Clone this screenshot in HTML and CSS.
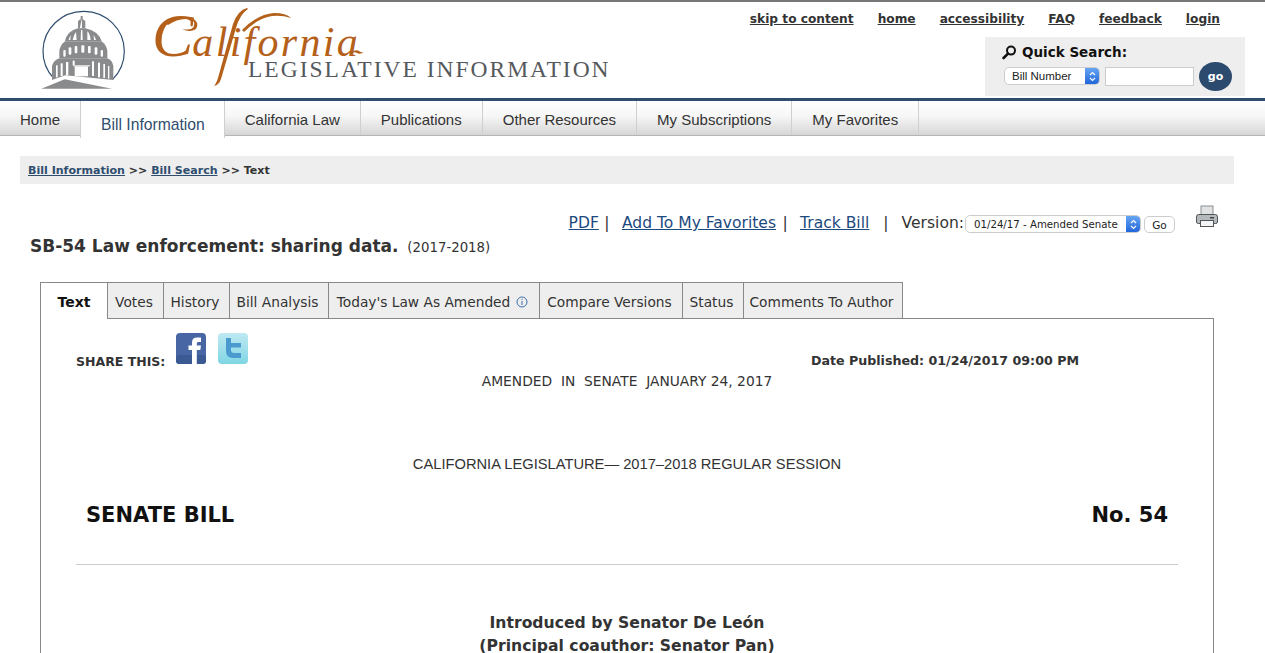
FILE: index.html
```html
<!DOCTYPE html>
<html lang="en">
<head>
<meta charset="utf-8">
<title>SB-54 Law enforcement: sharing data.</title>
<link rel="stylesheet" href="styles.css">
</head>
<body>
<header class="masthead">
  <svg class="seal" width="110" height="96" viewBox="0 6 330 288" aria-label="California State Capitol">
    <path d="M72 236 A122 120 0 1 1 248 238" fill="none" stroke="#2f4d6e" stroke-width="3.5"/>
    <g fill="#8a8b8d">
      <rect x="152" y="48" width="6" height="10"/>
      <path d="M144 85 V64 Q155 50 166 64 V85Z"/>
      <path d="M104 125 Q112 92 144 85 H166 Q204 92 216 125Z"/>
      <path d="M88 175 V152 Q92 132 104 125 H216 Q228 132 232 152 V175Z"/>
      <path d="M66 240 V198 Q70 182 88 175 H232 Q248 182 250 198 V240 L106 226Z"/>
      <path d="M34 266 L104 238 L246 266Z"/>
    </g>
    <g fill="#fff">
      <path d="M150 84 q3-20 6-26 v26z M128 120 q3-16 10-24 l2 24z M152 120 l1-30 h4 l1 30z M172 120 v-26 q8 6 10 26z M116 120 q2-8 6-14 l-1 14z M192 120 l-1-14 q5 6 7 14z"/>
      <rect x="100" y="150" width="7" height="20" rx="3"/><rect x="116" y="142" width="8" height="22" rx="3"/>
      <rect x="134" y="138" width="8" height="22" rx="3"/><rect x="154" y="136" width="9" height="22" rx="3"/>
      <rect x="174" y="138" width="8" height="22" rx="3"/><rect x="194" y="142" width="8" height="22" rx="3"/>
      <rect x="212" y="150" width="7" height="20" rx="3"/>
      <rect x="78" y="196" width="5" height="36"/><rect x="92" y="190" width="6" height="38"/>
      <rect x="108" y="186" width="7" height="40"/><rect x="128" y="182" width="6" height="14"/>
      <rect x="130" y="196" width="50" height="3"/><rect x="134" y="199" width="40" height="30"/>
      <rect x="186" y="184" width="6" height="44"/><rect x="204" y="188" width="6" height="44"/>
      <rect x="220" y="192" width="5" height="42"/><rect x="234" y="198" width="4" height="38"/>
    </g>
  </svg>
  <svg class="wordmark" width="480" height="96" viewBox="0 2 480 96">
    <text class="wordmark-script" x="2" y="56">C<tspan class="wordmark-rest" dx="-1">alifornia</tspan></text>
    <path class="wordmark-swash" d="M97 8 Q88 10 83 24 L68 78 Q66 84 64 86 Q69 85 71 79 L86 28 Q90 14 98 9Z"/>
    <path class="wordmark-swash" d="M92 30 Q108 14 124 13 Q136 13 141 18 Q132 15 122 16 Q108 18 94 32Z"/>
    <path class="wordmark-swash" d="M16 24 Q28 13 42 18 Q50 22 46 29 Q40 33 32 29 Q42 31 44 26 Q46 20 38 19 Q28 18 18 25Z"/>
    <path class="wordmark-swash" d="M200 53 Q205 49 209 51 Q211 53 214 52 Q210 55 207 53 Q204 51 200 54Z"/>
    <text class="wordmark-sub" x="98" y="77">LEGISLATIVE INFORMATION</text>
  </svg>
  <div class="masthead-right">
    <nav class="utility">
      <a href="#">skip to content</a>
      <a href="#">home</a>
      <a href="#">accessibility</a>
      <a href="#">FAQ</a>
      <a href="#">feedback</a>
      <a href="#">login</a>
    </nav>
    <form class="quick">
      <div class="quick-title">
        <svg width="15" height="15" viewBox="0 0 15 15"><circle cx="9" cy="5.6" r="4" fill="none" stroke="#111" stroke-width="2"/><path d="M6 8.6 L1.6 13" stroke="#111" stroke-width="2.6" stroke-linecap="round"/></svg>
        <span>Quick Search:</span>
      </div>
      <div class="quick-row">
        <div class="select select-quick">
          <span class="select-label">Bill Number</span>
          <span class="stepper"><svg width="7" height="11" viewBox="0 0 7 11"><path d="M1 4 L3.5 1.5 L6 4 M1 7 L3.5 9.5 L6 7" fill="none" stroke="#fff" stroke-width="1.2"/></svg></span>
        </div>
        <input class="quick-input" type="text" aria-label="Search">
        <button class="go" type="button">go</button>
      </div>
    </form>
  </div>
</header>

<nav class="mainnav">
  <a href="#">Home</a>
  <a href="#" class="current">Bill Information</a>
  <a href="#">California Law</a>
  <a href="#">Publications</a>
  <a href="#">Other Resources</a>
  <a href="#">My Subscriptions</a>
  <a href="#">My Favorites</a>
</nav>

<div class="crumbs"><a href="#">Bill Information</a> &gt;&gt; <a href="#">Bill Search</a> &gt;&gt; Text</div>

<div class="toolbar">
  <a href="#">PDF</a><span class="pipe pipe-a">|</span>
  <a href="#">Add To My Favorites</a><span class="pipe pipe-b">|</span>
  <a href="#">Track Bill</a><span class="pipe pipe-c">|</span>
  <span class="version">Version:</span>
  <div class="select select-version">
    <span class="select-label">01/24/17 - Amended Senate</span>
    <span class="stepper"><svg width="7" height="11" viewBox="0 0 7 11"><path d="M1 4 L3.5 1.5 L6 4 M1 7 L3.5 9.5 L6 7" fill="none" stroke="#fff" stroke-width="1.2"/></svg></span>
  </div>
  <button class="go-small" type="button">Go</button>
  <svg class="printer" width="22" height="22" viewBox="0 0 22 22">
    <rect x="5" y="1" width="12" height="10" fill="#dfe1e2" stroke="#8b9093"/>
    <path d="M2.500 9.500 H19.500 Q21.500 9.500 21.500 12 V17 Q21.500 18.500 19.500 18.500 H2.500 Q.5 18.500 .5 17 V12 Q.5 9.500 2.500 9.500Z" fill="#b4b9bb" stroke="#50565a"/>
    <rect x="4.500" y="15.500" width="13" height="6" fill="#f4f4f4" stroke="#50565a"/>
    <rect x="14" y="12" width="4" height="1.500" fill="#444"/>
  </svg>
</div>

<h1 class="bill-title">SB-54 Law enforcement: sharing data. <span>(2017-2018)</span></h1>

<div class="tabs">
  <a href="#" class="tab active">Text</a>
  <a href="#" class="tab">Votes</a>
  <a href="#" class="tab">History</a>
  <a href="#" class="tab">Bill Analysis</a>
  <a href="#" class="tab">Today's Law As Amended
    <svg class="info" width="12" height="12" viewBox="0 0 12 12"><circle cx="6" cy="6" r="5" fill="none" stroke="#3c6ea8"/><path d="M6 5 V9 M6 3 V4" stroke="#3c6ea8"/></svg>
  </a>
  <a href="#" class="tab">Compare Versions</a>
  <a href="#" class="tab">Status</a>
  <a href="#" class="tab">Comments To Author</a>
</div>

<main class="panel">
  <div class="share-row">
    <div class="share">
      <span class="share-label">SHARE THIS:</span>
      <svg width="30" height="31" viewBox="0 0 30 31">
        <rect width="30" height="31" rx="4" fill="#4766a3"/>
        <rect y="22" width="30" height="9" rx="3" fill="#3b5a94"/>
        <path d="M16 31 V17 H12.500 V12.500 H16 V9.500 Q16 4.500 21 4.500 H25 V9 H22 Q20.800 9 20.800 10.500 V12.500 H25 L24.300 17 H20.800 V31Z" fill="#fff"/>
      </svg>
      <svg width="30" height="31" viewBox="0 0 30 31">
        <defs><linearGradient id="tw" x1="0" y1="0" x2="0" y2="1"><stop offset="0" stop-color="#bfe9f2"/><stop offset="1" stop-color="#7fd6e4"/></linearGradient></defs>
        <rect width="30" height="31" rx="4" fill="url(#tw)"/>
        <path d="M8 5 H13 V10 H23 V14.500 H13 V17 Q13 20 16 20 H23 V25 H15 Q8 25 8 18Z" fill="#4a9ad0"/>
      </svg>
    </div>
    <div class="published">Date Published: 01/24/2017 09:00 PM</div>
  </div>
  <p class="amended">AMENDED&nbsp; IN&nbsp; SENATE&nbsp; JANUARY 24, 2017</p>
  <p class="session">CALIFORNIA LEGISLATURE— 2017–2018 REGULAR SESSION</p>
  <div class="bill-no"><span>SENATE BILL</span><span>No. 54</span></div>
  <hr class="rule">
  <p class="intro">Introduced by Senator De León</p>
  <p class="intro">(Principal coauthor: Senator Pan)</p>
</main>
</body>
</html>
```
FILE: styles.css
```css
* { box-sizing: border-box; }
html, body { margin: 0; padding: 0; height: 653px; overflow: hidden; }
body { background: #fff; color: #333; font-family: "DejaVu Sans", Verdana, sans-serif; }

.masthead {
  display: flex;
  height: 101px;
  padding-left: 30px;
  border-top: 2px solid #777;
  border-bottom: 3px solid #2f4d6e;
}
.seal { flex: none; }
.wordmark { flex: none; margin-left: 10px; }
.wordmark-script { font-family: "Liberation Serif", serif; font-style: italic; font-size: 62px; fill: #b4601a; }
.wordmark-rest { font-size: 42px; letter-spacing: 2.300px; }
.wordmark-swash { fill: #b4601a; }
.wordmark-sub { font-family: "Liberation Serif", serif; font-size: 23.500px; letter-spacing: 2px; fill: #55585c; }

.masthead-right { margin-left: auto; margin-right: 20px; width: 260px; display: flex; flex-direction: column; align-items: flex-end; position: relative; }
.utility { display: flex; gap: 24px; padding-top: 10px; margin-right: 25px; height: 35px; white-space: nowrap; font-size: 12.200px; font-weight: bold; }
.utility a { color: #333; }
.quick { width: 260px; height: 59px; background: #eee; padding: 5px 13px 0 17px; }
.quick-title { display: flex; align-items: center; gap: 5px; font-size: 13.500px; font-weight: bold; color: #111; height: 20px; }
.quick-row { display: flex; align-items: center; gap: 5px; padding-left: 2px; }

.select { display: flex; align-items: stretch; justify-content: space-between; background: #fff; border: 1px solid #ccc; border-radius: 5px; overflow: hidden; }
.select-label { display: flex; align-items: center; white-space: nowrap; color: #222; }
.stepper { display: flex; align-items: center; justify-content: center; width: 15px; margin: -1px; background: linear-gradient(#6aa9f5, #1d63d8); }
.select-quick { width: 96px; height: 18px; margin-top: -1px; font-family: "Liberation Sans", Arial, sans-serif; font-size: 11.500px; padding-left: 7px; }
.select-version { width: 176px; height: 18px; font-size: 10.200px; padding-left: 8px; }
.quick-input { width: 89px; height: 19px; border: 1px solid #ccc; background: #fff; padding: 0; }
.go { width: 33px; height: 29px; border: 0; border-radius: 50%; background: #2c4a6e; color: #fff; font-family: inherit; font-size: 11px; font-weight: bold; padding: 0; }

.mainnav {
  display: flex;
  align-items: flex-start;
  height: 35px;
  background: linear-gradient(#fff 0%, #f6f6f6 45%, #d6d6d6 100%);
  border-bottom: 1px solid #b5b5b5;
  font-family: "Liberation Sans", Arial, sans-serif;
  font-size: 15px;
}
.mainnav a {
  height: 33px;
  padding: 3px 20px 0;
  display: flex;
  align-items: center;
  color: #333;
  text-decoration: none;
  white-space: nowrap;
  border-right: 1px solid #cfcfcf;
}
.mainnav a:first-child { border-right: 0; }
.mainnav .current {
  height: 37px;
  padding: 10px 19px 0 20px;
  background: #fff;
  border-left: 1px solid #cfcfcf;
  position: relative;
  font-size: 15.700px;
  color: #2f4d6e;
}

.crumbs { margin: 20px 31px 0 20px; height: 28px; background: #eee; padding-left: 8px; display: flex; align-items: center; white-space: pre; font-size: 11.050px; font-weight: bold; color: #333; }
.crumbs a { color: #2f4d6e; }

.toolbar { display: flex; align-items: flex-start; justify-content: flex-end; height: 28px; margin-top: 21px; padding-right: 47px; font-size: 15.550px; color: #333; white-space: nowrap; }
.toolbar > a, .toolbar > .pipe, .toolbar > .version { margin-top: 9px; }
.toolbar a { color: #1c4a7e; }
.toolbar > .pipe-a { margin-left: 5.400px; margin-right: 12.400px; }
.toolbar > .pipe-b { margin-left: 6.400px; margin-right: 12.400px; }
.toolbar > .pipe-c { margin-left: 14px; margin-right: 13px; }
.select-version { margin-top: 10px; margin-left: 1px; }
.go-small { width: 31px; height: 17px; margin: 11px 0 0 3px; border: 1px solid #ccc; border-radius: 5px; background: #fff; color: #222; font-family: inherit; font-size: 10.500px; padding: 0; }
.printer { margin-left: 21px; }

.bill-title { margin: 3px 0 0 30px; height: 46px; font-size: 17px; line-height: 20px; font-weight: bold; color: #333; white-space: pre; }
.bill-title span { font-size: 13.300px; font-weight: normal; margin-left: 3px; }

.tabs { display: grid; grid-template-columns: 68px 56px 66px 99px 211px 143px 61px 159px; width: 863px; margin-left: 40px; height: 36px; position: relative; z-index: 1; }
.tab { display: flex; align-items: center; justify-content: center; gap: 6px; height: 36px; padding: 3px 3px 0 0; border-top: 1px solid #888; border-right: 1px solid #888; background: #eee; color: #333; font-size: 13.750px; text-decoration: none; white-space: nowrap; }
.tab.active { height: 37px; padding: 2px 0 0; border-left: 1px solid #888; background: #fff; font-size: 14px; font-weight: bold; color: #111; }
.info { flex: none; }

.panel { margin: 0 51px 0 40px; height: 335px; border: 1px solid #888; border-bottom: 0; padding: 0 35px; color: #333; }
.share-row { display: flex; justify-content: space-between; align-items: flex-start; height: 50px; padding-top: 14px; }
.share { display: flex; align-items: flex-start; gap: 12px; }
.share-label { font-size: 12.500px; font-weight: bold; margin-top: 21px; margin-right: -1px; }
.published { font-size: 12.650px; font-weight: bold; margin: 20px 99px 0 0; }
.amended { margin: 4px 0 0; text-align: center; font-size: 13.800px; line-height: 16px; }
.session { margin: 66px 0 0; text-align: center; font-family: "Liberation Sans", Arial, sans-serif; font-size: 14.700px; line-height: 18px; }
.bill-no { display: flex; justify-content: space-between; margin-top: 30px; padding: 0 10px; font-size: 21px; font-weight: bold; line-height: 24px; color: #111; }
.rule { margin: 37px 0 0; border: 0; border-top: 1px solid #ccc; }
.intro { margin: 0; text-align: center; font-size: 15.650px; font-weight: bold; line-height: 23px; }
.rule + .intro { margin-top: 46px; }
```
